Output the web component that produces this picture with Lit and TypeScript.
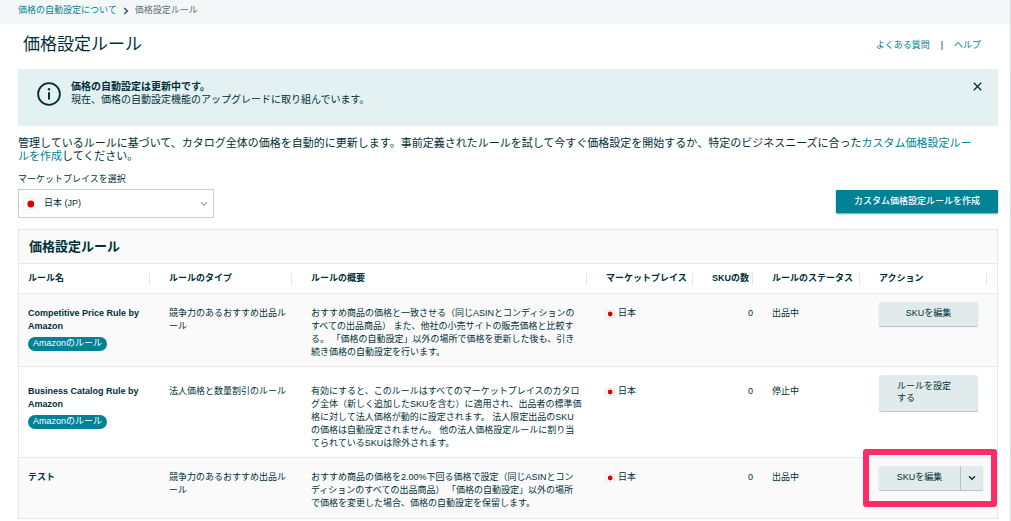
import { LitElement, html, css, nothing } from "lit";
import { customElement, property } from "lit/decorators.js";

interface Rule {
  name: string;
  managed: boolean;
  type: string;
  summary: string;
  count: number;
  status: string;
  action: string;
  layout: "single" | "wrapped" | "menu";
}

const RULES: Rule[] = [
  {
    name: "Competitive Price Rule by\nAmazon",
    managed: true,
    type: "競争力のあるおすすめ出品ル\nール",
    summary:
      "おすすめ商品の価格と一致させる（同じASINとコンディションの\nすべての出品商品） また、他社の小売サイトの販売価格と比較す\nる。 「価格の自動設定」以外の場所で価格を更新した後も、引き\n続き価格の自動設定を行います。",
    count: 0,
    status: "出品中",
    action: "SKUを編集",
    layout: "single",
  },
  {
    name: "Business Catalog Rule by\nAmazon",
    managed: true,
    type: "法人価格と数量割引のルール",
    summary:
      "有効にすると、このルールはすべてのマーケットプレイスのカタロ\nグ全体（新しく追加したSKUを含む）に適用され、出品者の標準価\n格に対して法人価格が動的に設定されます。 法人限定出品のSKU\nの価格は自動設定されません。 他の法人価格設定ルールに割り当\nてられているSKUは除外されます。",
    count: 0,
    status: "停止中",
    action: "ルールを設定\nする",
    layout: "wrapped",
  },
  {
    name: "テスト",
    managed: false,
    type: "競争力のあるおすすめ出品ル\nール",
    summary:
      "おすすめ商品の価格を2.00%下回る価格で設定（同じASINとコン\nディションのすべての出品商品） 「価格の自動設定」以外の場所\nで価格を変更した場合、価格の自動設定を保留します。",
    count: 0,
    status: "出品中",
    action: "SKUを編集",
    layout: "menu",
  },
];

@customElement("rule-table")
export class RuleTable extends LitElement {
  @property({ attribute: false }) rules: Rule[] = [];

  static styles = css`
    :host {
      display: block;
      border: 1px solid #e4e8e8;
    }
    .heading {
      margin: 0;
      padding: 8px 10px;
      font-size: 13px;
      line-height: 17px;
      font-weight: 700;
      background: #fafafa;
      border-bottom: 1px solid #e4e8e8;
    }
    .table {
      width: 100%;
      table-layout: fixed;
      border-collapse: separate;
      border-spacing: 0;
      line-height: 13px;
    }
    .c-name { width: 131px; }
    .c-type { width: 142px; }
    .c-market { width: 106px; }
    .c-count { width: 60px; }
    .c-status { width: 107px; }
    .c-action { width: 137px; }
    .th {
      padding: 8px 0;
      text-align: left;
      font-weight: 700;
      white-space: nowrap;
      border-bottom: 1px solid #e9ecec;
    }
    .label {
      display: block;
      padding: 0 3px 0 19px;
      border-right: 1px solid #e4e8e8;
    }
    .th:first-child .label { padding-left: 9px; }
    .th:last-child { padding-right: 10px; }
    .th.num { text-align: right; }
    .td {
      padding: 13px 0 7px 19px;
      vertical-align: top;
      white-space: pre;
    }
    .td:first-child { padding-left: 9px; }
    .row.wrapped .td { padding-top: 18px; }
    .row:last-child .td { padding-bottom: 8px; }
    .row:nth-child(odd) .td { background: #fafafa; }
    .row + .row .td { border-top: 1px solid #e4e8e8; }
    .td.num { text-align: right; }
    .row .td.act,
    .row.wrapped .td.act { padding-top: 8px; }
    .name { font-weight: 700; }
    .badge {
      display: table;
      margin-top: 4px;
      padding: 0 5px 1px;
      border-radius: 7px;
      background: #008296;
      color: #fff;
    }
    .market {
      display: flex;
      align-items: center;
      gap: 3px;
    }
    .flag {
      width: 10px;
      height: 8px;
      flex: none;
    }
    .market .flag { margin-left: -1px; }
    .btn {
      box-sizing: border-box;
      min-height: 24px;
      width: 99px;
      margin: 0;
      padding: 5px 0 6px;
      border: 0;
      border-radius: 2px;
      background: #e2ebeb;
      color: inherit;
      font: inherit;
      line-height: 13px;
      white-space: pre;
      box-shadow: 0 1px 1px #b6c0c0;
    }
    .btn.wrapped {
      padding: 5px 0 7px 18px;
      line-height: 12px;
      text-align: left;
    }
    .split {
      position: relative;
      display: flex;
      width: 104px;
    }
    .split .main {
      flex: 1;
      border-radius: 2px 0 0 2px;
      border-right: 1px solid #b6c0c0;
    }
    .split .more {
      width: 22px;
      padding: 0;
      display: grid;
      place-items: center;
      border-radius: 0 2px 2px 0;
    }
    .chev { width: 8px; height: 6px; }
    .mark {
      position: absolute;
      inset: -17px -14px -17px -16px;
      border: 6px solid #ff2a68;
      border-radius: 3px;
      pointer-events: none;
    }
  `;

  private action(rule: Rule) {
    if (rule.layout !== "menu") {
      return html`<button type="button" class="btn ${rule.layout}">${rule.action}</button>`;
    }
    return html`<div class="split"><button type="button" class="btn main">${rule.action}</button><button type="button" class="btn more" aria-label="その他のアクション"><svg class="chev" viewBox="0 0 8 6" fill="none" stroke="#002f36" stroke-width="1.4"><path d="M1 1.2 4 4.2 7 1.2" /></svg></button><span class="mark"></span></div>`;
  }

  render() {
    return html`
      <h2 class="heading">価格設定ルール</h2>
      <table class="table">
        <colgroup>
          <col class="c-name" /><col class="c-type" /><col /><col class="c-market" />
          <col class="c-count" /><col class="c-status" /><col class="c-action" />
        </colgroup>
        <thead>
          <tr>
            <th class="th" scope="col"><span class="label">ルール名</span></th>
            <th class="th" scope="col"><span class="label">ルールのタイプ</span></th>
            <th class="th" scope="col"><span class="label">ルールの概要</span></th>
            <th class="th" scope="col"><span class="label">マーケットプレイス</span></th>
            <th class="th num" scope="col"><span class="label">SKUの数</span></th>
            <th class="th" scope="col"><span class="label">ルールのステータス</span></th>
            <th class="th" scope="col"><span class="label">アクション</span></th>
          </tr>
        </thead>
        <tbody>
          ${this.rules.map(
            (r) => html`<tr class="row ${r.layout}">
              <td class="td"><span class="name">${r.name}</span>${r.managed
                ? html`<span class="badge">Amazonのルール</span>`
                : nothing}</td>
              <td class="td">${r.type}</td>
              <td class="td">${r.summary}</td>
              <td class="td"><div class="market"><svg class="flag" viewBox="0 0 10 8"><rect x=".5" y=".5" width="9" height="7" fill="#fff" stroke="#e8e8e8" /><circle cx="5.2" cy="4" r="2.4" fill="#d90000" /></svg><span>日本</span></div></td>
              <td class="td num">${r.count}</td>
              <td class="td">${r.status}</td>
              <td class="td act">${this.action(r)}</td>
            </tr>`
          )}
        </tbody>
      </table>
    `;
  }
}

@customElement("app-root")
export class AppRoot extends LitElement {
  static styles = css`
    :host {
      display: block;
      box-sizing: border-box;
      min-height: 100vh;
      border-right: 1px solid #dcdfdf;
      background: #fff;
      color: #002f36;
      font: 400 9px/13px "Liberation Sans", "Noto Sans CJK JP", sans-serif;
    }
    .link { color: #008296; text-decoration: none; }
    .crumbs {
      display: flex;
      align-items: center;
      gap: 6px;
      padding: 4px 18px 7px;
      background: #f3f7f8;
    }
    .sep { width: 6px; height: 8px; }
    .here { color: #5a6f73; }
    .top {
      display: flex;
      justify-content: space-between;
      align-items: center;
      padding: 9px 29px 12px 23px;
    }
    .title {
      margin: 0;
      font-size: 17px;
      line-height: 24px;
      font-weight: 400;
    }
    .help { display: flex; gap: 11px; }
    .page { padding: 0 12px 0 18px; }
    .alert {
      display: flex;
      gap: 10px;
      padding: 11px 16px 20px 19px;
      background: #e3f1f2;
      font-size: 10px;
    }
    .info { width: 24px; height: 24px; margin-top: 2px; flex: none; }
    .msg { flex: 1; }
    .msg p { margin: 0; }
    .close {
      align-self: flex-start;
      display: grid;
      place-items: center;
      width: 10px;
      height: 13px;
      padding: 0;
      border: 0;
      background: none;
    }
    .x { width: 9px; height: 9px; }
    .intro {
      margin: 11px 0 10px;
      font-size: 11px;
      padding-right: 16px;
    }
    .tools {
      display: flex;
      justify-content: space-between;
      align-items: flex-end;
      margin-bottom: 11px;
    }
    .field { display: flex; flex-direction: column; gap: 3px; }
    .picker { display: grid; align-items: center; width: 196px; }
    .picker > * { grid-area: 1 / 1; }
    .select {
      appearance: none;
      width: 100%;
      height: 29px;
      margin: 0;
      padding: 0 24px 0 25px;
      border: 1px solid #c3cfcf;
      border-radius: 0;
      background: #fff;
      color: inherit;
      font: inherit;
    }
    .flag { width: 15px; height: 12px; margin-left: 5px; pointer-events: none; }
    .chev {
      width: 8px;
      height: 6px;
      justify-self: end;
      margin-right: 6px;
      pointer-events: none;
    }
    .create {
      margin: 0 0 5px;
      padding: 5px 18px;
      border: 0;
      border-radius: 1px;
      background: #008296;
      color: #fff;
      font: inherit;
      font-weight: 500;
      box-shadow: 0 1px 2px #7d9a9e;
    }
  `;

  render() {
    return html`
      <div lang="ja">
        <nav class="crumbs">
          <a class="link" href="#">価格の自動設定について</a>
          <svg class="sep" viewBox="0 0 6 8" fill="none" stroke="#2d4a50" stroke-width="1.3"><path d="M1.2 1 4.4 4 1.2 7" /></svg>
          <span class="here">価格設定ルール</span>
        </nav>
        <header class="top">
          <h1 class="title">価格設定ルール</h1>
          <div class="help">
            <a class="link" href="#">よくある質問</a><span>|</span><a class="link" href="#">ヘルプ</a>
          </div>
        </header>
        <main class="page">
          <section class="alert">
            <svg class="info" viewBox="0 0 24 24" fill="none" stroke="#002f36">
              <circle cx="12" cy="12" r="10.9" stroke-width="1.8" />
              <path d="M12 10.2v7.2" stroke-width="2" />
              <circle cx="12" cy="7.2" r="1.2" fill="#002f36" stroke="none" />
            </svg>
            <div class="msg">
              <p><b>価格の自動設定は更新中です。</b></p>
              <p>現在、価格の自動設定機能のアップグレードに取り組んでいます。</p>
            </div>
            <button type="button" class="close" aria-label="閉じる">
              <svg class="x" viewBox="0 0 9 9" stroke="#002f36" stroke-width="1.3"><path d="M.8.8l7.4 7.4M8.2.8.8 8.2" /></svg>
            </button>
          </section>
          <p class="intro">管理しているルールに基づいて、カタログ全体の価格を自動的に更新します。事前定義されたルールを試して今すぐ価格設定を開始するか、特定のビジネスニーズに合った<a class="link" href="#">カスタム価格設定ルールを作成</a>してください。</p>
          <div class="tools">
            <div class="field">
              <label for="market">マーケットプレイスを選択</label>
              <div class="picker">
                <select class="select" id="market"><option>日本 (JP)</option></select>
                <svg class="flag" viewBox="0 0 15 12"><rect x=".5" y=".5" width="14" height="11" fill="#fff" stroke="#f0f0f0" /><circle cx="7.8" cy="6" r="3.4" fill="#d90000" /></svg>
                <svg class="chev" viewBox="0 0 8 6" fill="none" stroke="#6b7c80" stroke-width="1"><path d="M1 1.2 4 4.4 7 1.2" /></svg>
              </div>
            </div>
            <button type="button" class="create">カスタム価格設定ルールを作成</button>
          </div>
          <rule-table .rules=${RULES}></rule-table>
        </main>
      </div>
    `;
  }
}
